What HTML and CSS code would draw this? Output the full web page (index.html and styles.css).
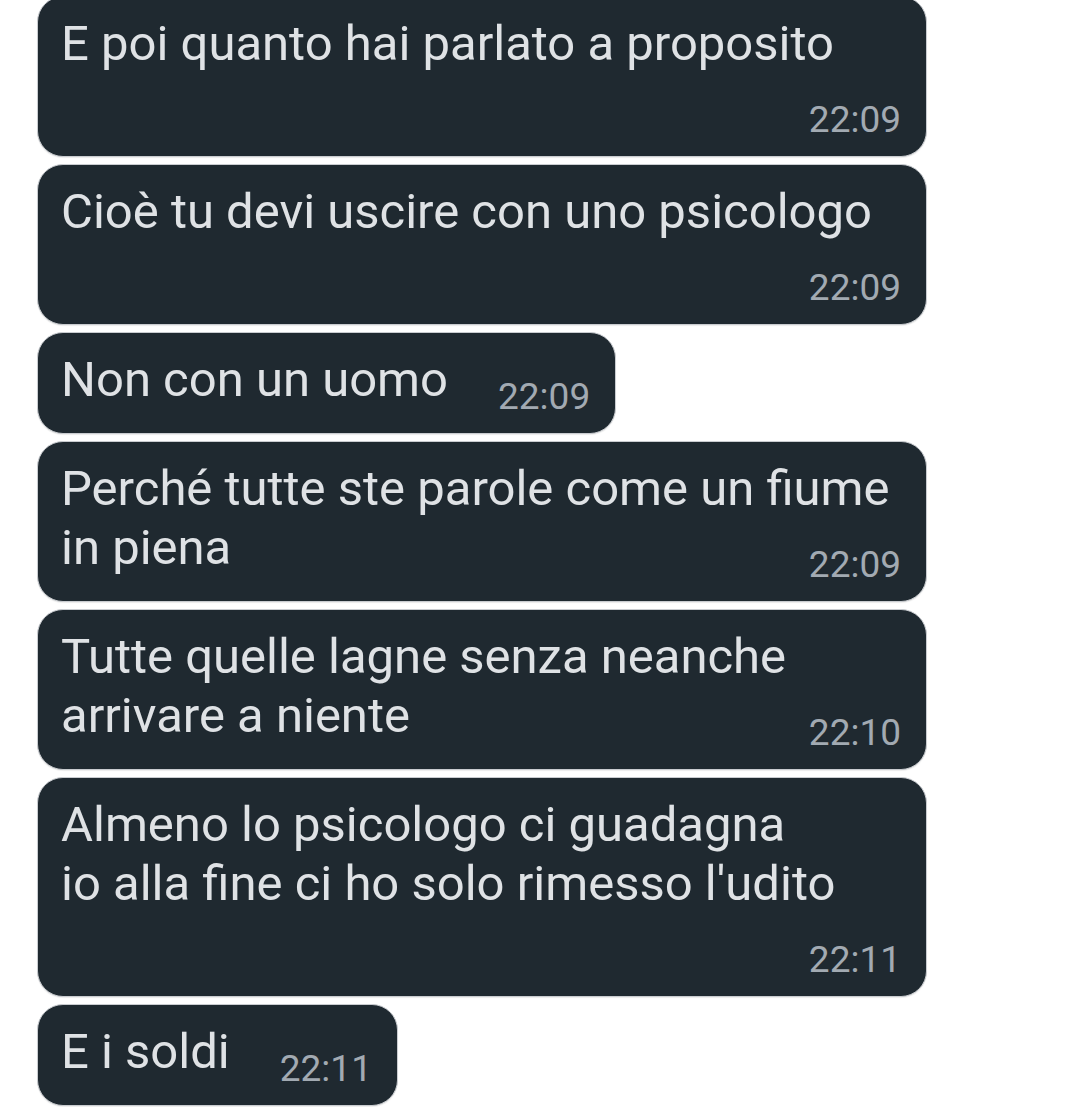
FILE: index.html
```html
<!DOCTYPE html>
<html lang="it">
<head>
<meta charset="utf-8">
<title>Chat</title>
<link rel="stylesheet" href="styles.css">
</head>
<body>
<main class="chat">
  <div class="bubble"><p class="text">E poi quanto hai parlato a proposito<span class="time">22:09</span></p></div>
  <div class="bubble"><p class="text">Cioè tu devi uscire con uno psicologo<span class="time">22:09</span></p></div>
  <div class="bubble"><p class="text">Non con un uomo<span class="time">22:09</span></p></div>
  <div class="bubble"><p class="text">Perché tutte ste parole come un fiume in piena<span class="time">22:09</span></p></div>
  <div class="bubble"><p class="text">Tutte quelle lagne senza neanche arrivare a niente<span class="time">22:10</span></p></div>
  <div class="bubble"><p class="text">Almeno lo psicologo ci guadagna<br>io alla fine ci ho solo rimesso l'udito<span class="time">22:11</span></p></div>
  <div class="bubble"><p class="text">E i soldi<span class="time">22:11</span></p></div>
</main>
</body>
</html>
```

FILE: styles.css
```css
html, body {
  margin: 0;
  padding: 0;
  background: #ffffff;
}

body {
  font-family: Roboto, "Noto Sans", "Liberation Sans", sans-serif;
  width: 1080px;
  height: 1107px;
  overflow: hidden;
}

.chat {
  display: flex;
  flex-direction: column;
  align-items: flex-start;
  gap: 7px;
  padding-left: 37px;
  margin-top: -4px;
}

.bubble {
  display: flow-root;
  box-sizing: border-box;
  max-width: 890px;
  background: #1f2930;
  border: 1.5px solid #c9ccd0;
  border-radius: 26px;
  padding: 17px 25px 15px 23px;
  box-shadow: 0 1px 1px rgba(0, 0, 0, 0.08);
}

.text {
  margin: 0;
  font-size: 49px;
  line-height: 59px;
  color: #dfe2e5;
}

.time {
  float: right;
  margin: 25px 0 0 50px;
  font-size: 37px;
  line-height: 43px;
  color: #a2aab2;
}
```
